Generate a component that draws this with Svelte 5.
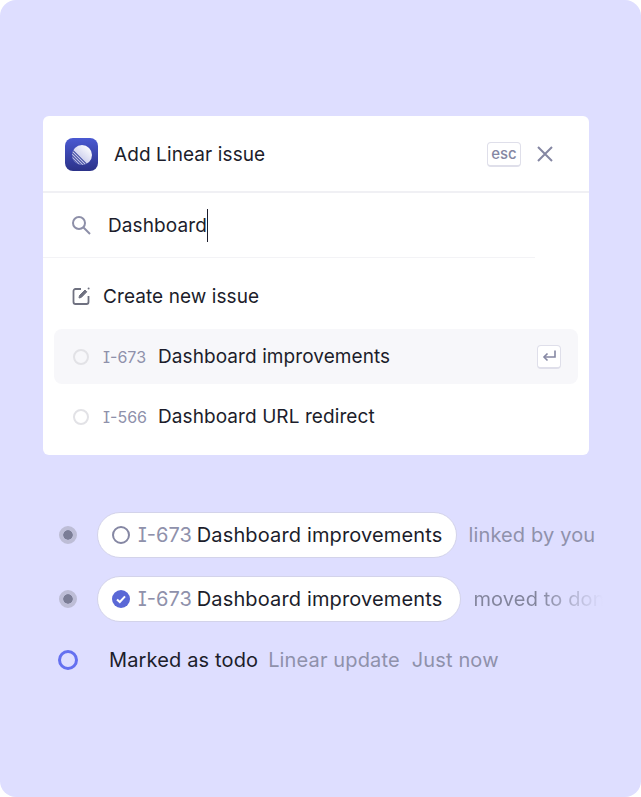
<script>
  const results = [
    { id: "I-673", title: "Dashboard improvements", active: true },
    { id: "I-566", title: "Dashboard URL redirect", active: false }
  ];
</script>

<main class="page">
  <section class="card">
    <header class="head">
      <div class="logo">
        <svg width="24" height="24" viewBox="0 0 24 24">
          <defs>
            <linearGradient id="ball" x1="0.9" y1="0.1" x2="0.2" y2="0.9">
              <stop offset="0" stop-color="#ffffff" />
              <stop offset="1" stop-color="#b9bce6" />
            </linearGradient>
            <clipPath id="ballclip"><circle cx="12" cy="12" r="10" /></clipPath>
          </defs>
          <circle cx="12" cy="12" r="10" fill="url(#ball)" />
          <g stroke="#3c479f" stroke-width="1.1" clip-path="url(#ballclip)">
            <line x1="0" y1="7.5" x2="16.5" y2="24" />
            <line x1="0" y1="4.5" x2="19.5" y2="24" />
            <line x1="0" y1="10.5" x2="13.5" y2="24" />
            <line x1="0" y1="13.5" x2="10.5" y2="24" />
          </g>
        </svg>
      </div>
      <h1>Add Linear issue</h1>
      <span class="esc">esc</span>
      <svg class="close" width="18" height="18" viewBox="0 0 18 18" fill="none" stroke="#8587a3" stroke-width="2">
        <path d="M2 2l14 14M16 2L2 16" />
      </svg>
    </header>

    <div class="search">
      <svg width="22" height="22" viewBox="0 0 22 22" fill="none" stroke="#8d8fa8" stroke-width="2">
        <circle cx="9" cy="9" r="6" />
        <path d="M13.5 13.5l6.5 6.5" />
      </svg>
      <span class="query">Dashboard</span><span class="caret"></span>
    </div>

    <div class="list">
      <div class="row create">
        <svg width="20" height="20" viewBox="0 0 20 20" fill="none" stroke="#6f7180" stroke-width="1.8">
          <path d="M10 3H4.5A2 2 0 0 0 2.5 5v11a2 2 0 0 0 2 2h11a2 2 0 0 0 2-2v-6" />
          <path d="M8 12l.5-2.5L14 4l1.8 1.8-5.5 5.6z" fill="#6f7180" stroke-width="1" />
          <circle cx="17.6" cy="2.6" r="1" fill="#6f7180" stroke="none" />
        </svg>
        <span>Create new issue</span>
      </div>
      {#each results as item}
        <div class="row issue" class:active={item.active}>
          <span class="dot"></span>
          <span class="code">{item.id}</span>
          <span class="title">{item.title}</span>
          {#if item.active}
            <span class="enter">
              <svg width="16" height="14" viewBox="0 0 16 14" fill="none" stroke="#8587a3" stroke-width="1.6">
                <path d="M14 1.5v6.5H3" />
                <path d="M6.5 4.5L3 8l3.5 3.5" />
              </svg>
            </span>
          {/if}
        </div>
      {/each}
    </div>
  </section>

  <section class="feed">
    <div class="event">
      <span class="marker"></span>
      <div class="pill">
        <span class="open"></span>
        <span class="pill-code">I-673</span>
        <span>Dashboard improvements</span>
      </div>
      <span class="note">linked by you</span>
    </div>
    <div class="event">
      <span class="marker"></span>
      <div class="pill done">
        <svg width="18" height="18" viewBox="0 0 18 18">
          <circle cx="9" cy="9" r="9" fill="#5a68d6" />
          <path d="M5 9.4l2.8 2.6L13 6.4" fill="none" stroke="#fff" stroke-width="2" />
        </svg>
        <span class="pill-code">I-673</span>
        <span>Dashboard improvements</span>
      </div>
      <span class="note fade">moved to done</span>
    </div>
    <div class="event last">
      <span class="ring"></span>
      <span class="marked">Marked as todo</span>
      <span class="meta">Linear update</span>
      <span class="meta time">Just now</span>
    </div>
  </section>
</main>

<style>
  :global(body) {
    background: #fff;
  }
  .page {
    width: 641px;
    height: 797px;
    box-sizing: border-box;
    padding: 116px 52px 0 43px;
    background: #dedeff;
    border-radius: 16px;
    font-family: Inter, "Liberation Sans", sans-serif;
    color: #1c1d2b;
    overflow: hidden;
  }
  .card {
    width: 546px;
    height: 339px;
    background: #fff;
    border-radius: 6px;
    overflow: hidden;
  }
  .head {
    height: 73px;
    display: flex;
    align-items: center;
    padding: 2px 35px 0 22px;
    border-bottom: 2px solid #f0f0f4;
  }
  .logo {
    width: 33px;
    height: 33px;
    border-radius: 8px;
    background: linear-gradient(#4a59d2, #2b3288);
    display: flex;
    align-items: center;
    justify-content: center;
    margin-right: 16px;
  }
  h1 {
    margin: 0;
    flex: 1;
    font-size: 19px;
    font-weight: 400;
    letter-spacing: 0.1px;
  }
  .esc {
    width: 32px;
    height: 22px;
    border: 1px solid #dfdfea;
    border-bottom-width: 2px;
    border-radius: 4px;
    font-size: 15px;
    font-weight: 500;
    line-height: 22px;
    text-align: center;
    color: #8587a3;
    margin-right: 15px;
  }
  .close {
    margin-top: -2px;
  }
  .search {
    width: 492px;
    height: 65px;
    box-sizing: border-box;
    display: flex;
    align-items: center;
    padding-left: 27px;
    border-bottom: 1px solid #f3f3f6;
  }
  .query {
    margin-left: 16px;
    font-size: 19px;
    letter-spacing: 0.1px;
  }
  .caret {
    width: 1px;
    height: 33px;
    background: #1c1d2b;
  }
  .list {
    padding: 11px 11px 0;
  }
  .row {
    display: flex;
    align-items: center;
    font-size: 19px;
    letter-spacing: 0.08px;
  }
  .create {
    height: 54px;
    padding: 0 0 0 17px;
    gap: 12px;
  }
  .issue {
    height: 55px;
    padding: 0 17px 0 19px;
    border-radius: 8px;
    margin-top: 6px;
  }
  .issue + .issue {
    margin-top: 5px;
  }
  .active {
    background: #f7f7fa;
  }
  .dot {
    width: 16px;
    height: 16px;
    box-sizing: border-box;
    border: 2px solid #e2e2e6;
    border-radius: 50%;
    margin-right: 14px;
  }
  .code {
    width: 43px;
    flex: none;
    white-space: nowrap;
    font-size: 16px;
    color: #8f91ab;
    letter-spacing: 0;
    font-feature-settings: "ss02", "cv08";
    margin-right: 12px;
  }
  .title {
    flex: 1;
  }
  .enter {
    width: 24px;
    height: 24px;
    box-sizing: border-box;
    border: 1px solid #dfdfea;
    border-bottom-width: 2px;
    border-radius: 4px;
    background: #fff;
    display: flex;
    align-items: center;
    justify-content: center;
  }
  .feed {
    margin: 57px -52px 0 -43px;
    padding-left: 59px;
    white-space: nowrap;
  }
  .event {
    display: flex;
    align-items: center;
    height: 46px;
    margin-bottom: 18px;
    font-size: 20px;
    letter-spacing: 0.14px;
  }
  .marker {
    width: 18px;
    height: 18px;
    box-sizing: border-box;
    border-radius: 50%;
    background: #7b7d96;
    border: 4px solid #bdbdd6;
    background-clip: padding-box;
    margin-right: 20px;
  }
  .pill {
    height: 46px;
    box-sizing: border-box;
    display: flex;
    align-items: center;
    gap: 6px;
    padding: 0 14px;
    background: #fff;
    border: 1px solid #d3d3ea;
    border-radius: 23px;
  }
  .pill.done {
    padding-right: 18px;
  }
  .open {
    width: 18px;
    height: 18px;
    box-sizing: border-box;
    border: 2.5px solid #8587a3;
    border-radius: 50%;
  }
  .pill-code {
    color: #8f91ab;
    letter-spacing: 0;
    font-feature-settings: "ss02", "cv08";
    margin: 0 -1px 0 2px;
  }
  .note {
    margin-left: 11px;
    color: #8f91ab;
  }
  .fade {
    width: 130px;
    margin-left: 12px;
    overflow: hidden;
    color: transparent;
    background: linear-gradient(90deg, #82849c 50%, #dedeff 100%);
    -webkit-background-clip: text;
    background-clip: text;
  }
  .ring {
    width: 20px;
    height: 20px;
    box-sizing: border-box;
    border: 3px solid #6470f0;
    border-radius: 50%;
    margin: 0 31px 0 -1px;
  }
  .marked {
    color: #1c1d2b;
  }
  .meta {
    margin-left: 10px;
    color: #8f91ab;
  }
  .time {
    margin-left: 12px;
  }
  .last {
    margin-top: -3px;
  }
</style>
